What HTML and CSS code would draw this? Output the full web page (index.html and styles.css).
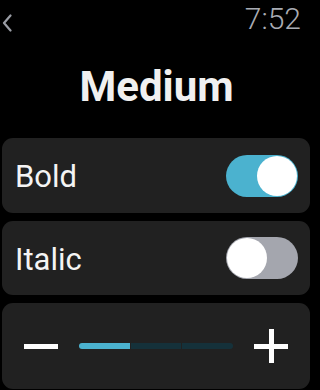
FILE: index.html
```html
<!DOCTYPE html>
<html>
<head>
<meta charset="utf-8">
<link rel="stylesheet" href="styles.css">
</head>
<body>
<div class="screen">
  <header class="status">
    <svg class="back" width="10" height="18" viewBox="0 0 10 18"><polyline points="8.5,1.5 2,9 8.5,16.5" fill="none" stroke="#9a9da5" stroke-width="2.2" stroke-linecap="round" stroke-linejoin="round"/></svg>
    <span class="time">7:52</span>
  </header>
  <h1 class="title">Medium</h1>
  <div class="list">
    <div class="card row">
      <span class="label">Bold</span>
      <span class="toggle on"><span class="knob"></span></span>
    </div>
    <div class="card row second">
      <span class="label">Italic</span>
      <span class="toggle off"><span class="knob"></span></span>
    </div>
    <div class="card stepper">
      <span class="minus"></span>
      <div class="track">
        <span class="seg fill"></span>
        <span class="seg"></span>
        <span class="seg"></span>
      </div>
      <span class="plus"><span class="h"></span><span class="v"></span></span>
    </div>
  </div>
</div>
</body>
</html>
```
FILE: styles.css
```css
html, body {
  margin: 0;
  padding: 0;
  background: #000;
}
body {
  font-family: Roboto, "Liberation Sans", sans-serif;
  color: #f2f2f2;
  width: 312px;
  height: 390px;
  overflow: hidden;
}
.screen {
  display: flex;
  flex-direction: column;
}
.status {
  height: 40px;
  box-sizing: border-box;
  padding: 4px 11px 0 1px;
  display: flex;
  justify-content: space-between;
  align-items: flex-start;
}
.back {
  margin-top: 10px;
  margin-left: 1px;
}
.time {
  font-size: 30px;
  line-height: 30px;
  font-weight: 300;
  color: #a9acb4;
}
.title {
  margin: 26px 0 30px;
  height: 42px;
  font-size: 42px;
  line-height: 42px;
  font-weight: 700;
  text-align: center;
  color: #f0f0f0;
  padding-left: 1px;
}
.list {
  display: flex;
  flex-direction: column;
  gap: 8px;
  padding: 0 2px;
}
.card {
  background: #212121;
  border-radius: 11px;
}
.row {
  height: 75px;
  display: flex;
  align-items: center;
  justify-content: space-between;
  padding: 0 12px 0 13px;
  box-sizing: border-box;
}
.row.second {
  height: 74px;
}
.label {
  font-size: 31px;
  line-height: 31px;
  color: #f4f4f4;
  margin-top: 2px;
}
.toggle {
  width: 72px;
  height: 42px;
  border-radius: 21px;
  box-sizing: border-box;
  padding: 1px;
  display: flex;
}
.toggle.on {
  background: #4bb2cf;
  justify-content: flex-end;
}
.toggle.off {
  background: #a4a6ae;
  justify-content: flex-start;
}
.knob {
  width: 40px;
  height: 40px;
  border-radius: 50%;
  background: #fff;
}
.stepper {
  height: 86px;
  display: flex;
  align-items: center;
  justify-content: space-between;
  padding: 0 22px;
  box-sizing: border-box;
}
.minus {
  width: 34px;
  height: 5px;
  background: #fff;
}
.track {
  width: 154px;
  height: 6px;
  display: flex;
  gap: 1px;
  border-radius: 3px;
  overflow: hidden;
}
.seg {
  flex: 1;
  background: #15313a;
}
.seg.fill {
  background: #4bb2cf;
}
.plus {
  width: 34px;
  height: 34px;
  display: grid;
  place-items: center;
}
.plus .h, .plus .v {
  grid-area: 1 / 1;
  background: #fff;
}
.plus .h {
  width: 34px;
  height: 5px;
}
.plus .v {
  width: 5px;
  height: 34px;
}
```
